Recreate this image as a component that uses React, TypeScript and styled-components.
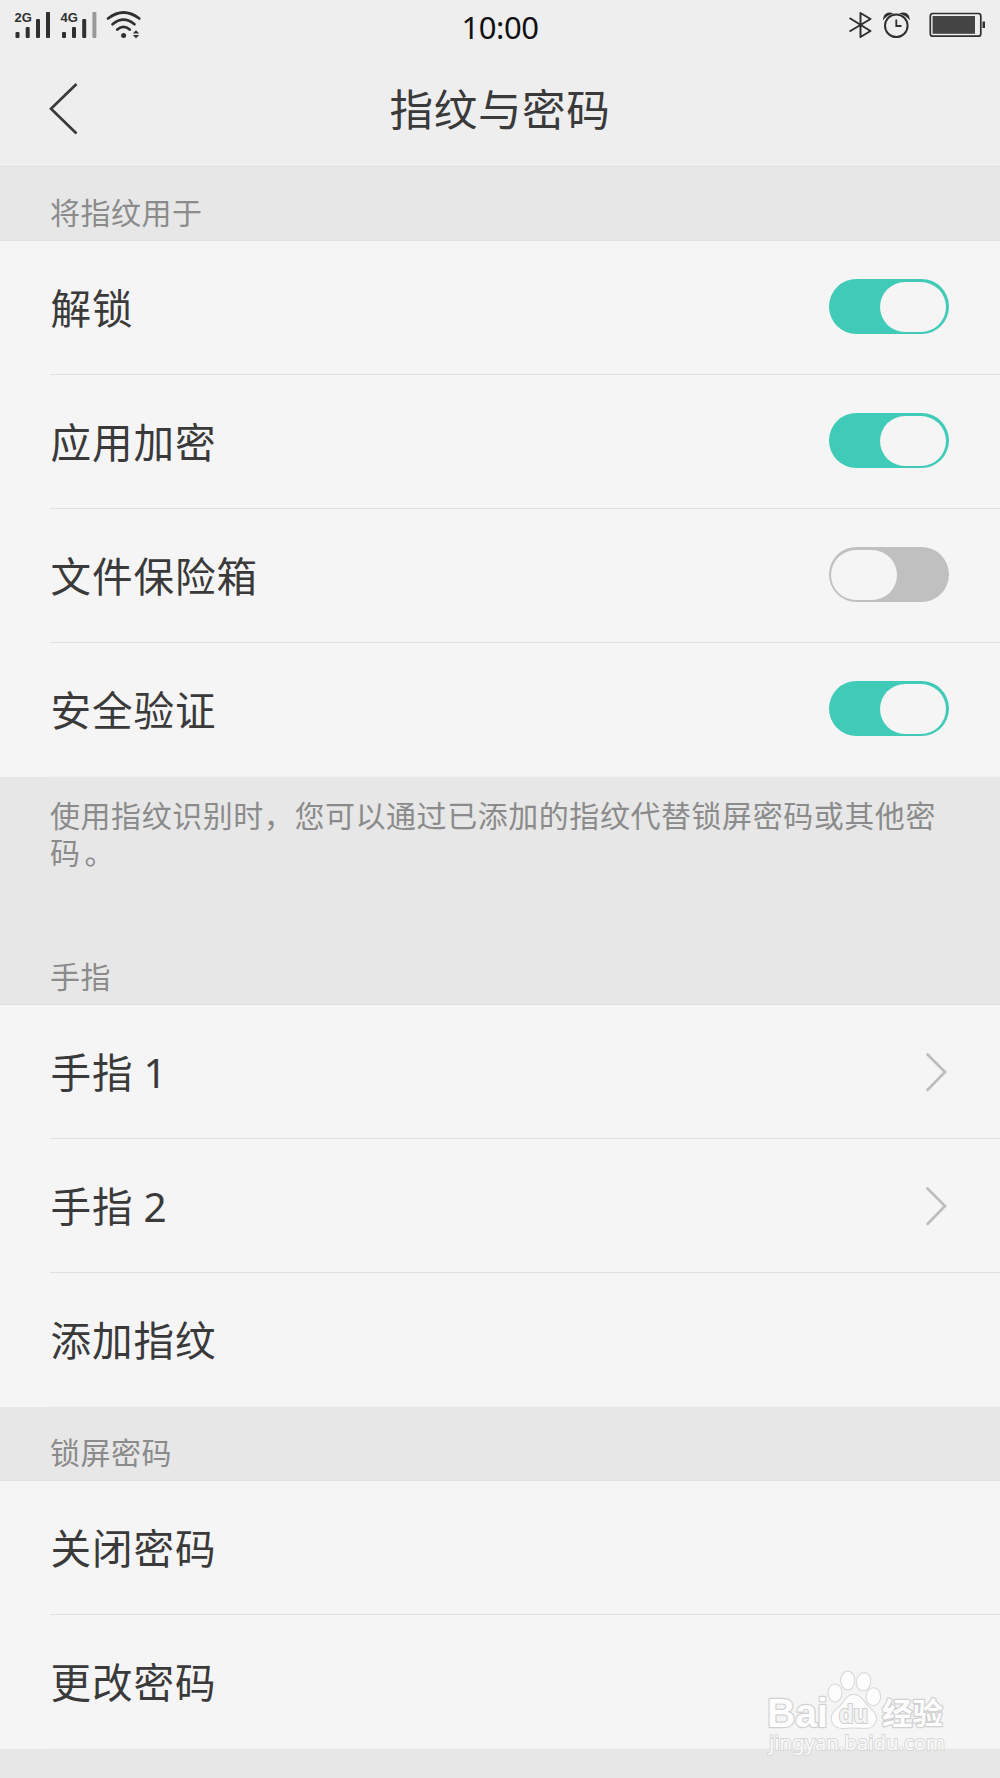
import React from "react";
import styled, { createGlobalStyle } from "styled-components";

const GlobalStyle = createGlobalStyle`
  body {
    margin: 0;
    background: #e7e7e7;
    font-family: "Noto Sans", "Noto Sans CJK SC", sans-serif;
    color: #3a3a3a;
  }
`;

const Screen = styled.main`
  position: relative;
  width: 1000px;
  height: 1778px;
  overflow: hidden;
  background: #e7e7e7;
`;

const Header = styled.header`
  height: 167px;
  box-sizing: border-box;
  background: #eeeeee;
  border-bottom: 1px solid #e0e0e0;
`;

const StatusBar = styled.div`
  display: grid;
  grid-template-columns: 1fr auto 1fr;
  height: 50px;
`;

const StatusIcons = styled.svg<{ $end?: boolean }>`
  display: block;
  width: 160px;
  height: 50px;
  justify-self: ${(p) => (p.$end ? "end" : "start")};
`;

const Clock = styled.time`
  font: 400 31px/54px "Noto Sans", sans-serif;
  letter-spacing: -0.4px;
  color: #111;
`;

const TitleBar = styled.div`
  display: grid;
  grid-template-columns: 100px 1fr 100px;
  align-items: center;
  height: 115px;
`;

const BackIcon = styled.svg`
  display: block;
  width: 100px;
  height: 115px;
`;

const Title = styled.h1`
  margin: 2px 0 0;
  text-align: center;
  font-weight: 400;
  font-size: 43.6px;
  letter-spacing: 0.6px;
  line-height: 60px;
`;

const Caption = styled.h2<{ $height: number }>`
  display: flex;
  align-items: flex-end;
  box-sizing: border-box;
  height: ${(p) => p.$height}px;
  margin: 0;
  padding: 0 50px 7px;
  border-bottom: 1px solid #e1e1e1;
  font-weight: 400;
  font-size: 30px;
  letter-spacing: 0.5px;
  line-height: 40px;
  color: #8b8b8b;
`;

const Note = styled.p`
  box-sizing: border-box;
  height: 148px;
  margin: 0;
  padding: 20px 50px 0;
  font-size: 30px;
  letter-spacing: 0.55px;
  line-height: 37px;
  color: #8b8b8b;
`;

const FullStop = styled.span`
  margin-left: 4px;
`;

const List = styled.ul`
  margin: 0;
  padding: 0 0 0 50px;
  list-style: none;
  background: #f5f5f5;
`;

const Row = styled.li`
  display: flex;
  align-items: center;
  justify-content: space-between;
  box-sizing: border-box;
  height: 134px;
  padding-right: 51px;
  border-bottom: 1px solid #e0e0e0;
  font-size: 40.6px;
  letter-spacing: 0.9px;
  word-spacing: -1.5px;
  line-height: 60px;

  &:last-child {
    border-bottom-color: #f0f0f0;
  }
`;

const Label = styled.span`
  padding: 3px 0 0 0.5px;
`;

const Track = styled.button<{ $on: boolean }>`
  display: flex;
  justify-content: ${(p) => (p.$on ? "flex-end" : "flex-start")};
  align-items: center;
  box-sizing: border-box;
  width: 120.5px;
  height: 55.5px;
  margin: 0 0 2px;
  padding: ${(p) => (p.$on ? "0 3.3px" : "0 2px")};
  border: 0;
  border-radius: 28px;
  background: ${(p) => (p.$on ? "#40cab8" : "#c0c0c0")};
`;

const Thumb = styled.span`
  width: 66px;
  height: 50px;
  border-radius: 25px;
  background: #f5f5f5;
`;

const ChevronIcon = styled.svg`
  display: block;
  width: 24px;
  height: 40px;
  margin-right: 1px;
`;

const Watermark = styled.svg`
  position: absolute;
  left: 750px;
  top: 1650px;
  width: 250px;
  height: 128px;
`;

function Toggle({ on }: { on: boolean }) {
  return (
    <Track type="button" role="switch" aria-checked={on} $on={on}>
      <Thumb />
    </Track>
  );
}

function Chevron() {
  return (
    <ChevronIcon viewBox="0 0 24 40" fill="none" stroke="#bcbcbc" strokeWidth="2.6" strokeLinecap="round">
      <path d="M3.5 2.5 21 20 3.5 38" />
    </ChevronIcon>
  );
}

function NetworkStatus() {
  return (
    <StatusIcons viewBox="0 0 160 50" fill="#303030">
      <g fontFamily="Liberation Sans, sans-serif" fontWeight="700" fontSize="13">
        <text x="14.5" y="22">2G</text>
        <text x="60.5" y="22">4G</text>
      </g>
      <rect x="15.5" y="32" width="4" height="6" rx="1" />
      <rect x="25.7" y="27" width="4" height="11" rx="1" />
      <rect x="36" y="19" width="4" height="19" rx="1" />
      <rect x="46" y="12" width="4" height="26" rx="1" />
      <rect x="62" y="32" width="4" height="6" rx="1" />
      <rect x="72" y="27" width="4" height="11" rx="1" />
      <rect x="82.2" y="19" width="4" height="19" rx="1" />
      <rect x="92.4" y="12" width="4" height="26" rx="1" fill="#999" />
      <g fill="none" stroke="#303030" strokeWidth="2.7" strokeLinecap="round">
        <path d="M108 18.5Q123.500 6.500 139.300 18.500" />
        <path d="M112.500 24.200Q123.500 15 134.500 24.200" />
        <path d="M117.300 29.500Q123.500 24.200 129.700 29.500" />
      </g>
      <circle cx="123.600" cy="35.500" r="2.500" />
      <path d="M132.800 33.500 136 30.300 139.200 33.500ZM132.800 35 136 38.200 139.200 35Z" />
    </StatusIcons>
  );
}

function DeviceStatus() {
  return (
    <StatusIcons $end viewBox="0 0 160 50" fill="none" stroke="#303030">
      <path d="M9.500 18 30.500 31 20.500 37V13L30.500 19 9.500 31.500" strokeWidth="2" strokeLinejoin="round" />
      <circle cx="56.300" cy="25.700" r="11.300" strokeWidth="2" />
      <path d="M56.300 19.500V26H61.500" strokeWidth="1.800" />
      <path d="M44 18A5.500 5.500 0 0 1 51 13.500Q46.800 14.700 44 18ZM68.800 18A5.500 5.500 0 0 0 61.500 13.500Q66 14.700 68.800 18Z" fill="#303030" strokeWidth="1.500" />
      <rect x="90.300" y="13.500" width="50.500" height="22.700" rx="2.500" strokeWidth="1.700" />
      <rect x="92.600" y="16" width="42.400" height="17.800" fill="#444" stroke="none" />
      <rect x="142.500" y="21.500" width="2.500" height="6.500" fill="#303030" stroke="none" />
    </StatusIcons>
  );
}

function BaiduMark() {
  return (
    <Watermark viewBox="0 0 250 128">
      <g fill="#fdfdfd" stroke="#d6d6d6" strokeWidth="2" paintOrder="stroke">
        <ellipse cx="85" cy="43" rx="6.500" ry="8.500" />
        <ellipse cx="97.700" cy="30.500" rx="6.500" ry="9" />
        <ellipse cx="113.500" cy="31.800" rx="6.700" ry="8.700" transform="rotate(10 113.500 31.800)" />
        <ellipse cx="123.300" cy="46.700" rx="6.800" ry="8.500" />
        <path d="M103.500 45C111 45 113 51 118 56.500C123.500 61.500 128 66 125 72.500C122 80 113 77.500 104 77.500C95 77.500 87 80 83 73C79.500 66 84 61.500 90 56.500C95 51 97 45 103.500 45Z" />
      </g>
      <g fill="#fdfdfd" stroke="#d0d0d0" strokeWidth="2.400" paintOrder="stroke" strokeLinejoin="round">
        <text x="17" y="76.500" fontFamily="Liberation Sans, sans-serif" fontWeight="700" fontSize="40" textLength="61" lengthAdjust="spacingAndGlyphs">Bai</text>
        <text x="132" y="73.500" fontFamily="Noto Sans CJK SC, sans-serif" fontWeight="700" fontSize="30" textLength="61" lengthAdjust="spacingAndGlyphs">经验</text>
      </g>
      <text x="89" y="73" fill="#f4f4f4" stroke="#cfcfcf" strokeWidth="2.200" paintOrder="stroke" fontFamily="Liberation Sans, sans-serif" fontWeight="700" fontSize="25" textLength="29" lengthAdjust="spacingAndGlyphs">du</text>
      <text x="19" y="99.500" fill="#fafafa" stroke="#d6d6d6" strokeWidth="1.800" paintOrder="stroke" fontFamily="Noto Sans, sans-serif" fontSize="20" textLength="176" lengthAdjust="spacingAndGlyphs">jingyan.baidu.com</text>
    </Watermark>
  );
}

const uses = [
  { label: "解锁", on: true },
  { label: "应用加密", on: true },
  { label: "文件保险箱", on: false },
  { label: "安全验证", on: true },
];

const fingers = [
  { label: "手指 1", opens: true },
  { label: "手指 2", opens: true },
  { label: "添加指纹", opens: false },
];

const passwordActions = ["关闭密码", "更改密码"];

export default function App() {
  return (
    <>
      <GlobalStyle />
      <Screen>
        <Header>
          <StatusBar>
            <NetworkStatus />
            <Clock>10:00</Clock>
            <DeviceStatus />
          </StatusBar>
          <TitleBar>
            <BackIcon viewBox="0 50 100 115" fill="none" stroke="#3a3a3a" strokeWidth="2.700">
              <path d="M76.500 84 51 108.800 76.500 133.500" />
            </BackIcon>
            <Title>指纹与密码</Title>
          </TitleBar>
        </Header>

        <Caption $height={74}>将指纹用于</Caption>
        <List>
          {uses.map((item) => (
            <Row key={item.label}>
              <Label>{item.label}</Label>
              <Toggle on={item.on} />
            </Row>
          ))}
        </List>
        <Note>
          使用指纹识别时，您可以通过已添加的指纹代替锁屏密码或其他密码<FullStop>。</FullStop>
        </Note>

        <Caption $height={80}>手指</Caption>
        <List>
          {fingers.map((item) => (
            <Row key={item.label}>
              <Label>{item.label}</Label>
              {item.opens && <Chevron />}
            </Row>
          ))}
        </List>

        <Caption $height={74}>锁屏密码</Caption>
        <List>
          {passwordActions.map((label) => (
            <Row key={label}>
              <Label>{label}</Label>
            </Row>
          ))}
        </List>
        <BaiduMark />
      </Screen>
    </>
  );
}
